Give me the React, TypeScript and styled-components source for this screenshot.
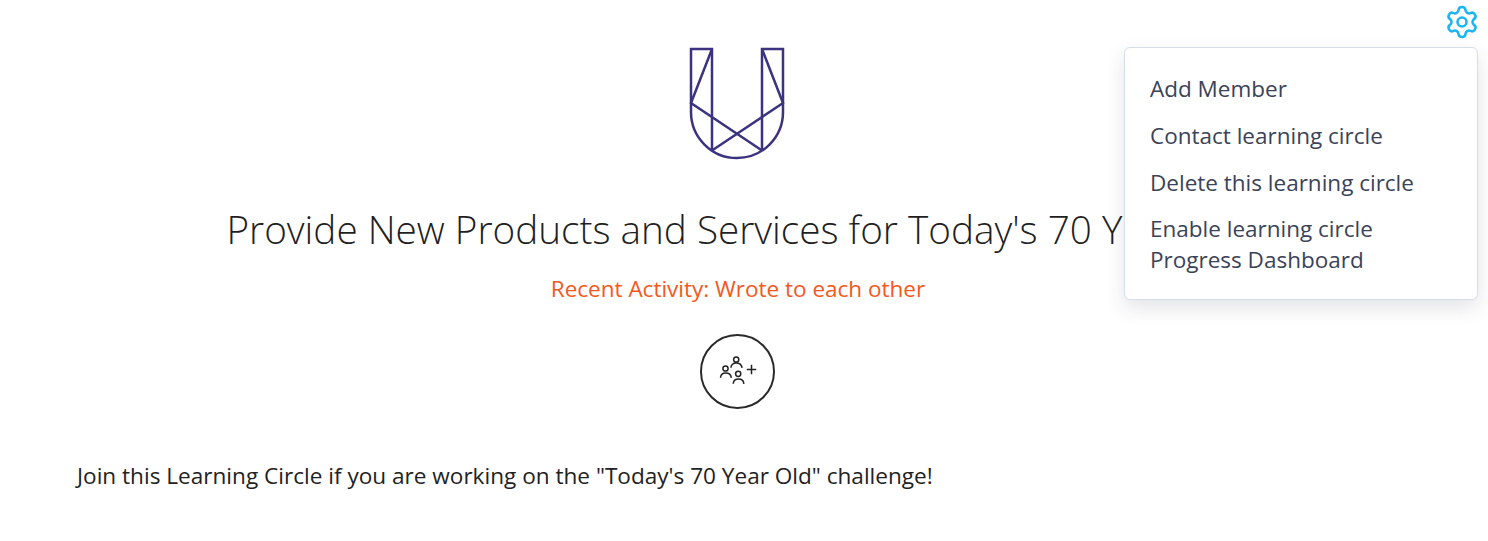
import React from 'react';
import styled, { createGlobalStyle } from 'styled-components';
import { Settings } from 'lucide-react';

const GlobalStyle = createGlobalStyle`
    html, body {
        margin: 0;
        background: #fff;
        font-family: "Open Sans", "Liberation Sans", sans-serif;
    }
`
const Page = styled.div`
    position: relative;
    width: 1488px;
    height: 541px;
    overflow: hidden;
`
const TopBar = styled.div`
    height: 47px;
    display: flex;
    justify-content: flex-end;
    align-items: flex-start;
    padding: 4px 8px 0 0;
    box-sizing: border-box;
`
const GearButton = styled.button`
    border: 0;
    padding: 0;
    background: none;
    width: 36px;
    height: 36px;
    color: #1cb5f2;
`
const Main = styled.main`
    display: flex;
    flex-direction: column;
    align-items: center;
    padding-right: 12px;
`
const LogoWrap = styled.div`
    margin-right: 2px;
`
const Title = styled.h1`
    margin: 43px 0 0;
    font-size: 38.7px;
    line-height: 52px;
    font-weight: 300;
    color: #1f1f1f;
    white-space: nowrap;
`
const TitleTail = styled.span`
    font-kerning: none;
    margin-right: -1px;
`
const Activity = styled.div`
    margin-top: 19px;
    font-size: 22.5px;
    line-height: 30px;
    color: #f4581c;
`
const JoinButton = styled.button`
    margin: 30px 2px 0 0;
    width: 75px;
    height: 75px;
    padding: 0;
    border: 2px solid #2a2a2a;
    border-radius: 50%;
    background: #fff;
`
const Description = styled.p`
    align-self: flex-start;
    margin: 52px 0 0 77px;
    font-size: 22.58px;
    line-height: 30px;
    color: #222;
`
const Menu = styled.ul`
    position: absolute;
    top: 47px;
    left: 1124px;
    width: 354px;
    height: 253px;
    box-sizing: border-box;
    margin: 0;
    padding: 25px 25px 0;
    list-style: none;
    display: flex;
    flex-direction: column;
    gap: 15.75px;
    background: #fff;
    border: 1.5px solid #d6deea;
    border-radius: 6px;
    box-shadow: 0 8px 20px rgba(40, 50, 70, 0.13);
`
const MenuItem = styled.li`
    font-size: 22.5px;
    line-height: 31px;
    color: #3a4358;
`

const Logo = () => (
    <svg width="96" height="113" viewBox="-1 -1 96 113" fill="none" stroke="#3c3380" strokeWidth="2.5" style={{ display: 'block' }}>
        <path d="M22 102.5V1H1V64A46 46 0 0 0 93 64V1H72V102.5" />
        <path d="M22 1L1 55L72 102.5M72 1L93 55L22 102.5" />
    </svg>
)

const GroupAddIcon = () => (
    <svg width="71" height="71" viewBox="1.5 2.5 71 71" fill="none" stroke="#222" strokeWidth="1.5" style={{ display: 'block' }}>
        <circle cx="35.7" cy="26" r="2.6" />
        <path d="M30.4 34.3C31 27.8 40.4 27.8 41.6 34.3" />
        <circle cx="25" cy="35" r="2.6" />
        <path d="M20 44.3C20.6 38 30 38 30.8 44.3" />
        <circle cx="37.7" cy="40.3" r="2.6" />
        <path d="M32.7 50.3C33.3 44 42.7 44 43.4 50.3" />
        <path d="M51 31.3V40.7M46.3 36H55.7" />
    </svg>
)

const menuItems = [
    'Add Member',
    'Contact learning circle',
    'Delete this learning circle',
]

const App = () => {
    return (
        <Page>
            <GlobalStyle />
            <TopBar>
                <GearButton aria-label="Settings">
                    <Settings size={36} strokeWidth={1.7} />
                </GearButton>
            </TopBar>
            <Main>
                <LogoWrap>
                    <Logo />
                </LogoWrap>
                <Title>Provide New Products and Services for Today's 70 <TitleTail>Year Old</TitleTail></Title>
                <Activity>Recent Activity: Wrote to each other</Activity>
                <JoinButton aria-label="Join">
                    <GroupAddIcon />
                </JoinButton>
                <Description>Join this Learning Circle if you are working on the "Today's 70 Year Old" challenge!</Description>
            </Main>
            <Menu>
                {menuItems.map((item) => (
                    <MenuItem key={item}>{item}</MenuItem>
                ))}
                <MenuItem>Enable learning circle<br />Progress Dashboard</MenuItem>
            </Menu>
        </Page>
    );
};

export default App;
